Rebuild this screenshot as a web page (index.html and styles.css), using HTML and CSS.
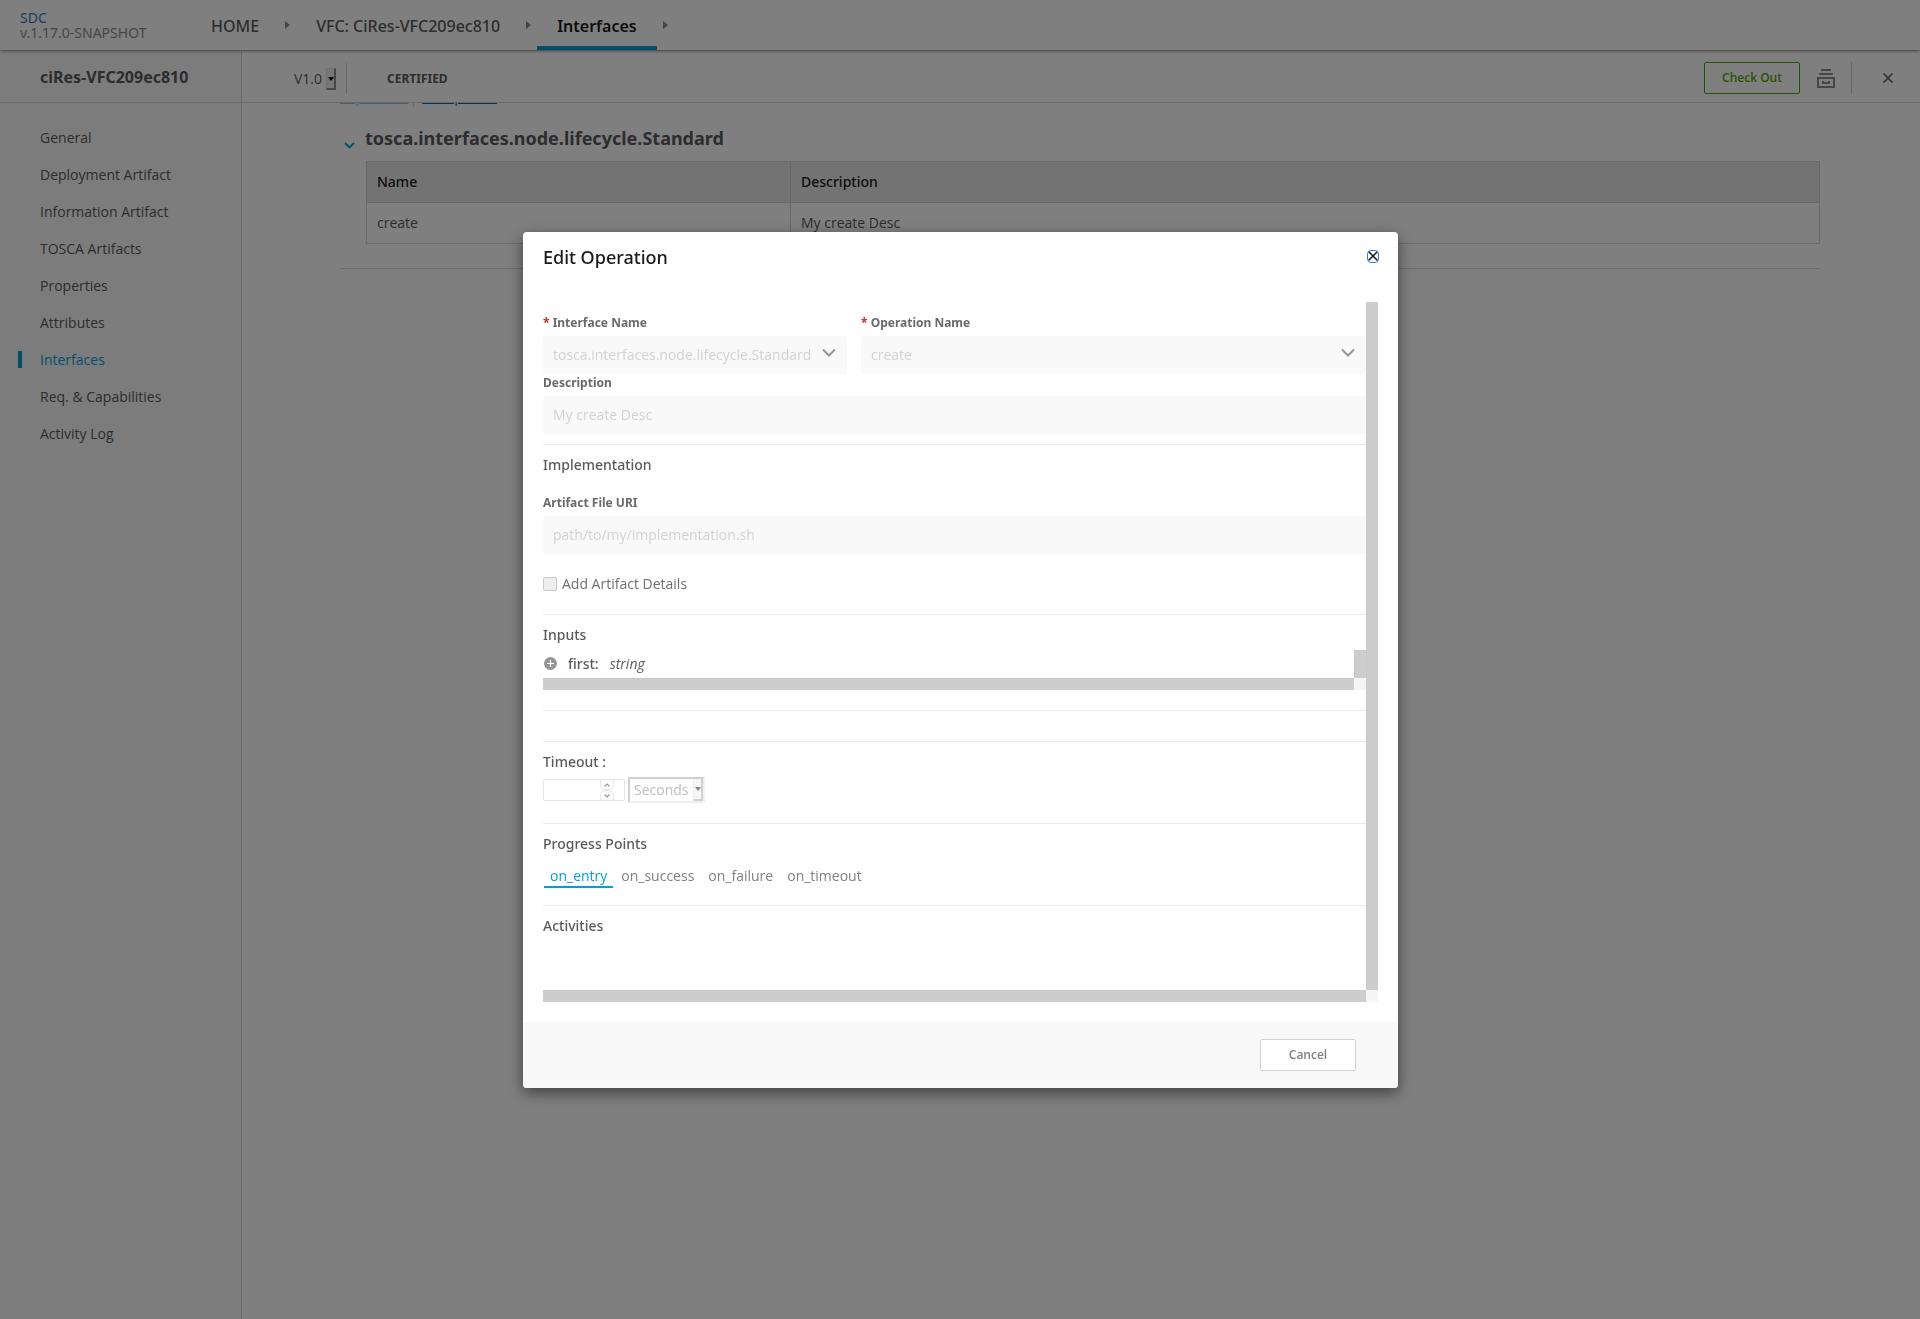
FILE: index.html
```html
<!DOCTYPE html>
<html lang="en">
<head>
<meta charset="utf-8">
<title>SDC - Interfaces</title>
<link rel="stylesheet" href="styles.css">
</head>
<body>
<div class="page">
  <header class="top-nav">
    <div class="brand"><a class="brand-name" href="#">SDC</a><span class="brand-version">v.1.17.0-SNAPSHOT</span></div>
    <nav class="crumbs">
      <a class="crumb" href="#">HOME</a>
      <svg class="crumb-arrow" viewBox="0 0 5 8"><path d="M0 0L5 4L0 8Z"/></svg>
      <a class="crumb" href="#">VFC: CiRes-VFC209ec810</a>
      <svg class="crumb-arrow" viewBox="0 0 5 8"><path d="M0 0L5 4L0 8Z"/></svg>
      <a class="crumb crumb-active" href="#">Interfaces</a>
      <svg class="crumb-arrow" viewBox="0 0 5 8"><path d="M0 0L5 4L0 8Z"/></svg>
    </nav>
  </header>
  <div class="workspace">
    <aside class="sidebar">
      <div class="sidebar-title">ciRes-VFC209ec810</div>
      <nav class="menu">
        <a class="menu-item" href="#">General</a>
        <a class="menu-item" href="#">Deployment Artifact</a>
        <a class="menu-item" href="#">Information Artifact</a>
        <a class="menu-item" href="#">TOSCA Artifacts</a>
        <a class="menu-item" href="#">Properties</a>
        <a class="menu-item" href="#">Attributes</a>
        <a class="menu-item menu-active" href="#">Interfaces</a>
        <a class="menu-item" href="#">Req. &amp; Capabilities</a>
        <a class="menu-item" href="#">Activity Log</a>
      </nav>
    </aside>
    <main class="main">
      <div class="toolbar">
        <div class="version">
          <select class="version-select" aria-label="Version"><option>V1.0</option></select>
          <span class="select-knob version-knob"></span>
        </div>
        <span class="status">CERTIFIED</span>
        <div class="actions">
          <button class="checkout" type="button">Check Out</button>
          <button class="icon-button archive" type="button" aria-label="Archive">
            <svg width="18" height="19" viewBox="0 0 18 19" fill="none" stroke="currentColor" stroke-width="2"><path d="M4 1H14M2 5H16M1 9H17V18H1ZM6 12V14H12V12"/></svg>
          </button>
          <button class="icon-button close-page" type="button" aria-label="Close">
            <svg width="10" height="10" viewBox="0 0 10 10" fill="none" stroke="currentColor" stroke-width="1.5"><path d="M.5 .5L9.500 9.500M9.500 .5L.5 9.500"/></svg>
          </button>
        </div>
      </div>
      <div class="content">
        <div class="expand-links">
          <a class="expand-link expand-disabled" href="#">Expand All</a>
          <span class="expand-separator"></span>
          <a class="expand-link" href="#">Collapse All</a>
        </div>
        <section class="interface">
          <h2 class="interface-title">
            <svg width="11" height="7" viewBox="0 0 11 7" fill="none" stroke="currentColor" stroke-width="1.800"><path d="M1 1L5.500 5.500L10 1"/></svg>
            <span>tosca.interfaces.node.lifecycle.Standard</span>
          </h2>
          <table class="operations">
            <thead><tr><th class="name-col">Name</th><th>Description</th></tr></thead>
            <tbody><tr><td>create</td><td>My create Desc</td></tr></tbody>
          </table>
        </section>
      </div>
    </main>
  </div>
</div>

<div class="overlay">
  <div class="modal" role="dialog" aria-labelledby="modal-title">
    <div class="modal-head">
      <h1 class="modal-title" id="modal-title">Edit Operation</h1>
      <button class="icon-button modal-close" type="button" aria-label="Close dialog">
        <svg width="12" height="13" viewBox="0 0 12 13" fill="none" stroke="currentColor" stroke-width="1.500"><path d="M1.500 1.500L10.500 10.500M10.500 1.500L1.500 10.500"/></svg>
      </button>
    </div>
    <div class="scroll-frame modal-scroll">
      <form class="form">
        <div class="name-row">
          <div class="field">
            <label class="label" for="iface"><span class="required">*</span> Interface Name</label>
            <div class="dropdown">
              <select class="control" id="iface" disabled><option>tosca.interfaces.node.lifecycle.Standard</option></select>
              <svg class="chevron" viewBox="0 0 14 9"><path d="M1 1.500L7 7.500L13 1.500"/></svg>
            </div>
          </div>
          <div class="field">
            <label class="label" for="oper"><span class="required">*</span> Operation Name</label>
            <div class="dropdown">
              <select class="control control-wide" id="oper" disabled><option>create</option></select>
              <svg class="chevron" viewBox="0 0 14 9"><path d="M1 1.500L7 7.500L13 1.500"/></svg>
            </div>
          </div>
        </div>
        <div class="field">
          <label class="label" for="desc">Description</label>
          <input class="control control-wide" id="desc" type="text" value="My create Desc" disabled>
        </div>
        <section class="section section-first">
          <h3 class="section-title">Implementation</h3>
          <div class="field field-uri">
            <label class="label" for="uri">Artifact File URI</label>
            <input class="control control-wide" id="uri" type="text" value="path/to/my/implementation.sh" disabled>
          </div>
          <label class="check"><input class="check-box" type="checkbox" disabled>Add Artifact Details</label>
        </section>
        <section class="section">
          <h3 class="section-title">Inputs</h3>
          <div class="scroll-frame inputs-scroll">
            <div class="input-row">
              <svg width="13" height="13" viewBox="0 0 13 13"><circle cx="6.500" cy="6.500" r="6.500" fill="#959595"/><path d="M6.500 3V10M3 6.500H10" stroke="#fff" stroke-width="1.200"/></svg>
              <span class="input-name">first:</span><em class="input-type">string</em>
            </div>
            <div class="bar-v"></div><div class="bar-h"></div><div class="bar-corner"></div>
          </div>
        </section>
        <section class="section section-empty"></section>
        <section class="section">
          <h3 class="section-title"><label for="timeout">Timeout :</label></h3>
          <div class="timeout-row">
            <div class="number">
              <input class="number-input" id="timeout" type="number" disabled>
              <div class="spinner">
                <button class="spin" type="button" aria-label="Increase" disabled><svg width="6" height="4" viewBox="0 0 6 4"><path d="M.5 3.500L3 1L5.500 3.500"/></svg></button>
                <button class="spin spin-down" type="button" aria-label="Decrease" disabled><svg width="6" height="4" viewBox="0 0 6 4"><path d="M.5 .5L3 3L5.500 .5"/></svg></button>
              </div>
            </div>
            <div class="unit">
              <select class="unit-select" aria-label="Timeout unit" disabled><option>Seconds</option></select>
              <span class="select-knob unit-knob"></span>
            </div>
          </div>
        </section>
        <section class="section section-progress">
          <h3 class="section-title">Progress Points</h3>
          <div class="tabs">
            <a class="tab tab-active" href="#">on_entry</a>
            <a class="tab" href="#">on_success</a>
            <a class="tab" href="#">on_failure</a>
            <a class="tab" href="#">on_timeout</a>
          </div>
        </section>
        <section class="section section-activities">
          <h3 class="section-title">Activities</h3>
        </section>
      </form>
      <div class="bar-v"></div><div class="bar-h"></div><div class="bar-corner"></div>
    </div>
    <div class="modal-foot"><button class="cancel" type="button">Cancel</button></div>
  </div>
</div>
</body>
</html>
```
FILE: styles.css
```css
* { box-sizing: border-box; }

body {
  margin: 0;
  background: #fff;
  color: #5a5a5a;
  font: 14px/20px "Open Sans", "Noto Sans", sans-serif;
}

a { color: inherit; text-decoration: none; }
h1, h2, h3 { margin: 0; }
button, input, select { font: inherit; color: inherit; }
svg { display: block; }

.page { display: flex; flex-direction: column; min-height: 100vh; }

/* Headings and labels */
.brand, .crumb, .sidebar-title, .status, .interface-title, .operations th,
.modal-title, .label, .section-title, .input-name {
  font-family: "Noto Sans", "Open Sans", sans-serif;
}

/* Breadcrumb header */
.top-nav {
  display: flex;
  height: 50px;
  padding-left: 20px;
  box-shadow: 0 1px 3px rgba(0, 0, 0, .5);
  position: relative;
  z-index: 1;
}
.brand { display: flex; flex-direction: column; width: 171px; padding-top: 10px; line-height: 15px; }
.brand-name { color: #337ab7; }
.brand-version { color: #8c8c8c; }
.crumbs { display: flex; align-items: center; gap: 6px; }
.crumb {
  height: 50px;
  padding: 4px 20px 0;
  border-bottom: 4px solid transparent;
  font-size: 16px;
  font-weight: 500;
  line-height: 44px;
}
.crumb-active { border-bottom-color: #009fdb; color: #191919; font-weight: 600; }
.crumb-arrow { width: 5px; height: 8px; fill: #8c8c8c; }

/* Side menu */
.workspace { display: flex; flex: 1; padding-top: 2px; }
.sidebar { width: 242px; border-right: 1px solid #d2d2d2; background: #f8f8f8; }
.sidebar-title {
  height: 51px;
  padding: 0 40px;
  border-bottom: 1px solid #d2d2d2;
  font-size: 16px;
  font-weight: 700;
  line-height: 50px;
}
.menu { display: flex; flex-direction: column; gap: 20px; padding: 26px 0 0 18px; }
.menu-item { padding-left: 18px; border-left: 4px solid transparent; line-height: 17px; }
.menu-active { border-left-color: #009fdb; color: #009fdb; }

/* Toolbar */
.main { flex: 1; min-width: 0; }
.toolbar {
  display: flex;
  align-items: center;
  height: 51px;
  padding: 2px 27px 0 52px;
  border-bottom: 1px solid #d2d2d2;
}
.version { display: flex; align-items: center; height: 31px; padding: 2px 10px 0 0; border-right: 1px solid #d2d2d2; }
.version-select { width: 32px; padding: 0; border: 0; background: none; appearance: none; }
.select-knob { display: grid; place-items: center; background: #efefef; }
.select-knob::after { content: ""; border: 3px solid transparent; border-top: 4px solid #000; border-bottom: 0; }
.version-knob { width: 10px; height: 22px; border: 2px outset #e0e0e0; border-left-width: 1px; border-top-width: 1px; }
.status { margin-left: 40px; padding-top: 2px; font-size: 12px; font-weight: 700; }
.actions { display: flex; align-items: center; margin-left: auto; }
.checkout {
  width: 96px;
  height: 32px;
  padding: 0;
  border: 1px solid #4ca90c;
  border-radius: 2px;
  background: #fff;
  color: #4ca90c;
  font-size: 12px;
  font-weight: 600;
}
.icon-button { padding: 0; border: 0; background: none; }
.archive { margin: 0 16px 0 17px; color: #8c8c8c; }
.close-page { display: flex; align-items: center; height: 32px; padding-left: 31px; border-left: 1px solid #d2d2d2; }

/* Interface list, scrolled under the toolbar */
.content { margin: 0 100px 0 98px; overflow: hidden; }
.expand-links { display: flex; gap: 5px; margin-top: -16px; line-height: 20px; }
.expand-link { color: #0568ae; text-decoration: underline; }
.expand-disabled { color: #9bbdd9; }
.expand-separator { width: 1px; margin-right: 3px; background: #d2d2d2; }
.interface { padding: 19px 0 24px; border-bottom: 1px solid #d2d2d2; }
.interface-title {
  display: flex;
  align-items: flex-end;
  gap: 10px;
  padding-left: 4px;
  font-size: 18px;
  font-weight: 700;
  line-height: 24px;
}
.interface-title svg { margin-bottom: 1px; color: #009fdb; }
.operations {
  width: calc(100% - 26px);
  margin: 11px 0 0 26px;
  border-collapse: collapse;
  table-layout: fixed;
}
.operations th, .operations td { height: 41px; padding: 0 10px; border: 1px solid #d2d2d2; text-align: left; }
.operations th { background: #e6e6e6; color: #191919; font-weight: 500; }
.name-col { width: 424px; }

/* Dialog */
.overlay {
  display: flex;
  align-items: center;
  justify-content: center;
  position: fixed;
  inset: 0;
  z-index: 2;
  padding: 1px 0 0 1px;
  background: rgba(0, 0, 0, .5);
}
.modal {
  width: 875px;
  max-width: 100%;
  border-radius: 4px;
  background: #fff;
  box-shadow: 0 5px 15px rgba(0, 0, 0, .5);
}
.modal-head { display: flex; align-items: center; justify-content: space-between; height: 70px; padding: 0 19px 21px 20px; }
.modal-title { color: #191919; font-size: 18px; font-weight: 500; line-height: 24px; }
.modal-close { border-radius: 4px; outline: 1px solid #2f7fe0; outline-offset: -1px; color: #191919; }

.scroll-frame { display: grid; grid-template-columns: minmax(0, 1fr) 12px; grid-template-rows: 1fr 12px; }
.modal-scroll { margin: 0 20px 20px; }
.bar-v, .bar-h { background: #cdcdcd; }
.bar-v { border-left: 1px solid #cdc7c2; }
.bar-h { border-top: 1px solid #cdc7c2; }
.bar-corner { background: #f6f5f4; }

.form { display: flex; flex-direction: column; padding-top: 12px; overflow: hidden; }
.name-row { display: grid; grid-template-columns: 304px minmax(0, 1fr); gap: 14px; }
.field { display: flex; flex-direction: column; gap: 4px; }
.label { color: #6a6a6a; font-size: 12px; font-weight: 700; line-height: 18px; }
.required { color: #cf2a2a; }
.control {
  width: 100%;
  height: 38px;
  padding: 0 10px;
  border: 0;
  border-radius: 2px;
  background: #f9f9f9;
  color: #d2d2d2;
  opacity: 1;
  appearance: none;
}
input.control { padding-bottom: 2px; }
.control-wide { border-radius: 2px 0 0 2px; }
.dropdown { display: grid; align-items: center; }
.dropdown > * { grid-area: 1 / 1; }
.chevron { justify-self: end; width: 14px; height: 9px; margin: 0 11px 5px 0; fill: none; stroke: #959595; stroke-width: 2; }

.section { padding: 10px 0 20px; border-top: 1px solid #eaeaea; }
.section-first { margin-top: 10px; }
.section-title { color: #5a5a5a; font-size: 14px; font-weight: 500; line-height: 20px; }
.field-uri { margin: 19px 0 20px; }
.check { display: flex; align-items: center; gap: 5px; color: #6f6f6f; }
.check-box { width: 14px; height: 14px; margin: 0; border: 1px solid #c8c8c8; border-radius: 2px; background: #efefef; appearance: none; }
.inputs-scroll { margin-top: 5px; }
.input-row { display: flex; align-items: center; height: 28px; padding: 0 0 1px 1px; }
.input-name { margin: 0 11px; font-weight: 500; }
.section-empty { padding: 30px 0 0; }

.timeout-row { display: flex; align-items: center; gap: 3px; margin-top: 5px; }
.number { display: grid; width: 82px; }
.number > * { grid-area: 1 / 1; }
.number-input {
  width: 100%;
  height: 22px;
  padding: 0 4px;
  border: 1px solid #e6e6e6;
  border-radius: 2px;
  background: #fff;
  appearance: textfield;
}
.spinner { display: flex; flex-direction: column; justify-self: end; width: 14px; margin-right: 11px; }
.spin {
  display: grid;
  place-items: center;
  height: 11px;
  padding: 0;
  border: 1px solid #e6e6e6;
  border-radius: 2px 2px 5px 5px;
  background: #fff;
}
.spin-down { border-radius: 5px 5px 2px 2px; }
.spin svg { fill: none; stroke: #959595; stroke-width: 1.2; }
.unit {
  display: flex;
  width: 77px;
  height: 26px;
  border: 2px solid;
  border-color: #d0d0d0 #efefef #efefef #d0d0d0;
}
.unit-select { flex: 1; min-width: 0; padding: 0 0 0 4px; border: 0; background: #fff; color: #bdbdbd; opacity: 1; appearance: none; }
.unit-knob { width: 10px; border: 2px solid #d0d0d0; border-top: 0; border-left: 1px solid #efefef; background: #f6f6f6; }
.unit-knob::after { border-top-color: #858585; }

.section-progress { padding-bottom: 17px; }
.tabs { display: flex; gap: 2px; margin: 5px 0 0 1px; padding-top: 8px; }
.tab { padding: 0 6px 1px; border-bottom: 2px solid transparent; color: #808080; line-height: 18px; }
.tab-active { border-bottom-color: #009fdb; color: #009fdb; }
.section-activities { padding-bottom: 54px; }

.modal-foot {
  display: flex;
  align-items: center;
  justify-content: flex-end;
  height: 66px;
  padding-right: 42px;
  border-radius: 4px;
  background: #f8f8f8;
}
.cancel {
  width: 96px;
  height: 32px;
  padding: 0;
  border: 1px solid #d2d2d2;
  border-radius: 2px;
  background: #fff;
  color: #808080;
  font-size: 12px;
  font-weight: 600;
}
```
